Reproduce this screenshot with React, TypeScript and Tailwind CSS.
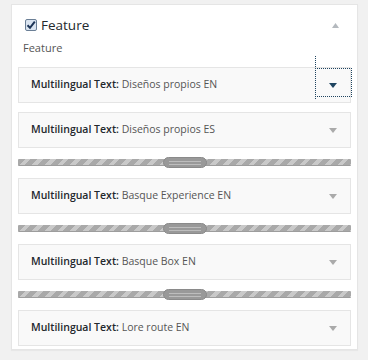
import React from "react";

const items = [
  { value: "Diseños propios EN", focused: true },
  { value: "Diseños propios ES" },
  { value: "Basque Experience EN" },
  { value: "Basque Box EN" },
  { value: "Lore route EN" },
];

function Splitter() {
  return (
    <div className="relative h-[7px] w-full">
      <div
        className="h-[7px] w-full rounded-[1px] border-b border-[#9d9d9d]"
        style={{
          backgroundImage:
            "repeating-linear-gradient(135deg, #a9a9a9 0px, #a9a9a9 5px, #c9c9c9 5px, #c9c9c9 9px)",
        }}
      />
      <div className="absolute left-[145px] top-[-2px] flex h-[11px] w-[44px] flex-col justify-center gap-[2px] rounded-[6px] border border-[#8a8a8a] bg-[#999999] px-[5px]">
        <div className="h-px w-full bg-[#bdbdbd]" />
        <div className="h-px w-full bg-[#bdbdbd]" />
      </div>
    </div>
  );
}

function Item({ value, focused }: { value: string; focused?: boolean }) {
  return (
    <div className="relative flex h-[36px] items-center border border-[#e5e5e5] bg-[#f9f9f9] pl-[12px]">
      <span className="text-[10.5px] text-[#23282d]">
        <span className="font-semibold">Multilingual Text:</span>{" "}
        <span className="text-[#555]">{value}</span>
      </span>
      <div className="ml-auto mr-[13px] flex items-center">
        <svg width="8" height="5" viewBox="0 0 8 5">
          <path d="M0 0 H8 L4 5 Z" fill={focused ? "#1f4460" : "#aaaaaa"} />
        </svg>
      </div>
      {focused && (
        <>
          <div className="absolute left-[296px] top-[-12px] h-[43px] w-0 border-l border-dotted border-[#1f4460]" />
          <div className="absolute left-[296px] top-[0px] h-[29px] w-[37px] border border-dotted border-[#1f4460]" />
        </>
      )}
    </div>
  );
}

export default function App() {
  return (
    <div
      className="h-[360px] w-[368px] bg-[#f1f1f1] pt-[4px] pl-[11px]"
      style={{ fontFamily: '"Open Sans", "Noto Sans", sans-serif' }}
    >
      <div className="h-[346px] w-[347px] border border-[#e5e5e5] bg-white shadow-[0_1px_1px_rgba(0,0,0,0.04)]">
        <div className="flex items-center pl-[13px] pr-[18px] pt-[11px]">
          <div className="flex h-[12px] w-[12px] items-center justify-center rounded-[2px] border border-[#6b7f96] bg-[#dbe5f1]">
            <svg width="10" height="10" viewBox="0 0 10 10">
              <path d="M1.5 5.2 L4 7.8 L8.8 1.6" stroke="#1d3557" strokeWidth="2" fill="none" />
            </svg>
          </div>
          <span className="ml-[4px] text-[13.5px] font-medium leading-[18px] text-[#23282d]">Feature</span>
          <svg className="ml-auto" width="7" height="5" viewBox="0 0 7 5">
            <path d="M0 5 H7 L3.5 0 Z" fill="#b4b9be" />
          </svg>
        </div>
        <div className="mt-[7px] pl-[11px] text-[11px] leading-[14px] text-[#555]">Feature</div>
        <div className="mt-[12px] flex flex-col px-[6px]">
          <Item {...items[0]} />
          <div className="h-[9px]" />
          <Item {...items[1]} />
          <div className="pt-[11px] pb-[12px]"><Splitter /></div>
          <Item {...items[2]} />
          <div className="pt-[11px] pb-[12px]"><Splitter /></div>
          <Item {...items[3]} />
          <div className="pt-[11px] pb-[12px]"><Splitter /></div>
          <Item {...items[4]} />
        </div>
      </div>
    </div>
  );
}
